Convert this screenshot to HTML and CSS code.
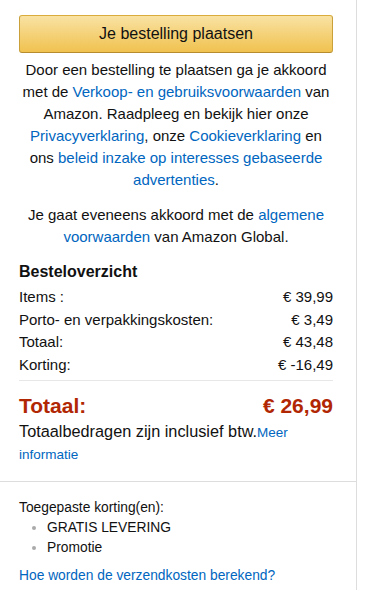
FILE: index.html
```html
<!DOCTYPE html>
<html lang="nl">
<head>
<meta charset="utf-8">
<link rel="stylesheet" href="styles.css">
</head>
<body>
<div class="box">
  <div class="section">
    <button class="btn">Je bestelling plaatsen</button>
    <p class="legal">Door een bestelling te plaatsen ga je akkoord met de <a href="#">Verkoop- en gebruiksvoorwaarden</a> van Amazon. Raadpleeg en bekijk hier onze <a href="#">Privacyverklaring</a>, onze <a href="#">Cookieverklaring</a> en ons <a href="#">beleid inzake op interesses gebaseerde advertenties</a>.</p>
    <p class="legal legal2">Je gaat eveneens akkoord met de <a href="#">algemene voorwaarden</a> van Amazon Global.</p>
    <h3 class="title">Besteloverzicht</h3>
    <div class="rows">
      <div class="row"><span>Items :</span><span>€ 39,99</span></div>
      <div class="row"><span>Porto- en verpakkingskosten:</span><span>€ 3,49</span></div>
      <div class="row"><span>Totaal:</span><span>€ 43,48</span></div>
      <div class="row"><span>Korting:</span><span>€ -16,49</span></div>
    </div>
    <div class="total"><span>Totaal:</span><span>€ 26,99</span></div>
    <p class="vat">Totaalbedragen zijn inclusief btw.<a href="#">Meer informatie</a></p>
  </div>
  <div class="section section2">
    <div class="applied">Toegepaste korting(en):</div>
    <ul class="promos">
      <li>GRATIS LEVERING</li>
      <li>Promotie</li>
    </ul>
    <a class="ship" href="#">Hoe worden de verzendkosten berekend?</a>
  </div>
</div>
</body>
</html>
```

FILE: styles.css
```css
html, body {
  margin: 0;
  padding: 0;
  background: #fff;
}
body {
  font-family: "Liberation Sans", Arial, sans-serif;
  color: #111;
  font-size: 15px;
}
a {
  color: #0066c0;
  text-decoration: none;
}
.box {
  width: 357px;
  border-right: 1px solid #ddd;
  min-height: 590px;
  box-sizing: border-box;
}
.section {
  padding: 15px 23px 0 19px;
}
.btn {
  display: block;
  width: 100%;
  height: 38px;
  margin: 0;
  border: 1px solid;
  border-color: #d9ac3c #c9a03a #b58d2f;
  border-radius: 3px;
  background: linear-gradient(to bottom, #f9e2a3, #f0c24f);
  font-family: "Liberation Sans", Arial, sans-serif;
  font-size: 16px;
  color: #111;
  cursor: pointer;
  padding: 0;
}
.legal {
  margin: 6px 0 0;
  text-align: center;
  line-height: 22px;
  font-size: 15px;
}
.legal2 {
  margin-top: 13px;
}
.title {
  margin: 13px 0 0;
  font-size: 16px;
  font-weight: bold;
  line-height: 22px;
}
.rows {
  margin-top: 3px;
  padding-bottom: 4px;
  border-bottom: 1px solid #e7e7e7;
}
.row {
  display: flex;
  justify-content: space-between;
  line-height: 22.5px;
  font-size: 15px;
}
.total {
  display: flex;
  justify-content: space-between;
  color: #b12704;
  font-weight: bold;
  font-size: 21px;
  line-height: 24px;
  margin-top: 13px;
}
.vat {
  margin: 3px 0 0;
  font-size: 16.3px;
  line-height: 20px;
  padding-bottom: 16px;
}
.vat a {
  font-size: 13.5px;
}
.section2 {
  border-top: 1px solid #ddd;
  padding-top: 16px;
  font-size: 13.8px;
}
.applied {
  line-height: 20px;
}
.promos {
  margin: 0;
  padding: 0 0 0 28px;
  line-height: 20px;
}
.promos li::marker {
  color: #aaa;
}
.ship {
  display: block;
  margin-top: 8px;
  line-height: 20px;
}
```
